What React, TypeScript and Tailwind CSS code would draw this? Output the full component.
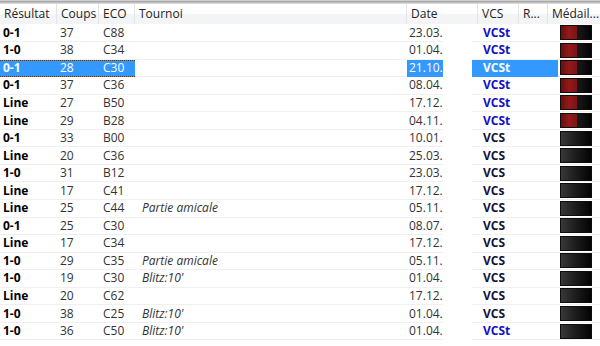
import React from "react";

type Game = {
  res: string;
  coups: string;
  eco: string;
  tournoi?: string;
  date: string;
  vcs: string;
  medal: boolean;
};

const games: Game[] = [
  { res: "0-1", coups: "37", eco: "C88", date: "23.03.", vcs: "VCSt", medal: true },
  { res: "1-0", coups: "38", eco: "C34", date: "01.04.", vcs: "VCSt", medal: true },
  { res: "0-1", coups: "28", eco: "C30", date: "21.10.", vcs: "VCSt", medal: true },
  { res: "0-1", coups: "37", eco: "C36", date: "08.04.", vcs: "VCSt", medal: true },
  { res: "Line", coups: "27", eco: "B50", date: "17.12.", vcs: "VCSt", medal: true },
  { res: "Line", coups: "29", eco: "B28", date: "04.11.", vcs: "VCSt", medal: true },
  { res: "0-1", coups: "33", eco: "B00", date: "10.01.", vcs: "VCS", medal: false },
  { res: "Line", coups: "20", eco: "C36", date: "25.03.", vcs: "VCS", medal: false },
  { res: "1-0", coups: "31", eco: "B12", date: "23.03.", vcs: "VCS", medal: false },
  { res: "Line", coups: "17", eco: "C41", date: "17.12.", vcs: "VCs", medal: false },
  { res: "Line", coups: "25", eco: "C44", tournoi: "Partie amicale", date: "05.11.", vcs: "VCS", medal: false },
  { res: "0-1", coups: "25", eco: "C30", date: "08.07.", vcs: "VCS", medal: false },
  { res: "Line", coups: "17", eco: "C34", date: "17.12.", vcs: "VCS", medal: false },
  { res: "1-0", coups: "29", eco: "C35", tournoi: "Partie amicale", date: "05.11.", vcs: "VCS", medal: false },
  { res: "1-0", coups: "19", eco: "C30", tournoi: "Blitz:10'", date: "01.04.", vcs: "VCS", medal: false },
  { res: "Line", coups: "20", eco: "C62", date: "17.12.", vcs: "VCS", medal: false },
  { res: "1-0", coups: "38", eco: "C25", tournoi: "Blitz:10'", date: "01.04.", vcs: "VCS", medal: false },
  { res: "1-0", coups: "36", eco: "C50", tournoi: "Blitz:10'", date: "01.04.", vcs: "VCSt", medal: false },
];

function Medal({ red }: { red: boolean }) {
  return (
    <div className="flex h-[15px] w-[32px] shrink-0 border border-[#0c0c0c] bg-gradient-to-r from-[#383838] via-[#1c1c1c] to-[#050505]">
      {red && <div className="h-full w-[16px] shrink-0 bg-gradient-to-r from-[#6a0e0e] via-[#921a1a] to-[#7a1414]" />}
    </div>
  );
}

function Row({ g, selected }: { g: Game; selected: boolean }) {
  const sel = selected ? "bg-[#3399ff] text-white border-y border-dotted border-[#5a3a1a]" : "";
  const line = "border-b border-[#f0f0f0]";
  return (
    <div className="flex h-[17.55px] items-center text-[12px] leading-none text-[#333]">
      <div className={`flex h-full w-[135px] items-center ${selected ? sel : line}`}>
        <span className={`w-[57px] pl-[3px] font-bold ${selected ? "text-white" : "text-black"}`}>{g.res}</span>
        <span className="w-[43px] pl-[3px]">{g.coups}</span>
        <span className="pl-[3px]">{g.eco}</span>
      </div>
      <div className={`flex h-full w-[272px] items-center pl-[7px] italic ${line}`}>{g.tournoi}</div>
      <div className={`flex h-full w-[36px] items-center pl-[2px] whitespace-nowrap ${selected ? "bg-[#3399ff] text-white" : line}`}>{g.date}</div>
      <div className="w-[29px] h-full" />
      <div className={`flex h-full w-[86px] items-center pl-[11px] font-bold ${selected ? "bg-[#3399ff] text-white" : `${line} ${g.vcs === "VCSt" ? "text-[#1010c8]" : "text-[#12123a]"}`}`}>
        {g.vcs}
      </div>
      <div className={`flex h-full w-[42px] items-center pl-[2px] ${line}`}>
        <Medal red={g.medal} />
      </div>
    </div>
  );
}

function Head({ w, label, last }: { w: string; label: string; last?: boolean }) {
  return (
    <div className={`${w} flex h-full items-center pl-[4px] ${last ? "" : "border-r border-[#e2e4e7]"}`}>
      {label}
    </div>
  );
}

export default function App() {
  return (
    <div className="h-[346px] w-[600px] overflow-hidden bg-white" style={{ fontFamily: '"Open Sans", "Noto Sans", sans-serif' }}>
      <div className="h-[4px] border-t border-[#d0d0d0] bg-gradient-to-b from-[#9c9c9c] to-[#e4e4e4]" />
      <div className="flex h-[20px] bg-gradient-to-b from-white from-50% to-[#f3f4f6] to-50% text-[12px] text-[#222]">
        <Head w="w-[57px]" label="Résultat" />
        <Head w="w-[42px]" label="Coups" />
        <Head w="w-[36px]" label="ECO" />
        <Head w="w-[272px]" label="Tournoi" />
        <Head w="w-[71px]" label="Date" />
        <Head w="w-[41px]" label="VCS" />
        <Head w="w-[29px]" label="R..." />
        <Head w="w-[52px]" label="Médail..." last />
      </div>
      <div className="pt-[0.5px]">
        {games.map((g, i) => (
          <Row key={i} g={g} selected={i === 2} />
        ))}
      </div>
    </div>
  );
}
